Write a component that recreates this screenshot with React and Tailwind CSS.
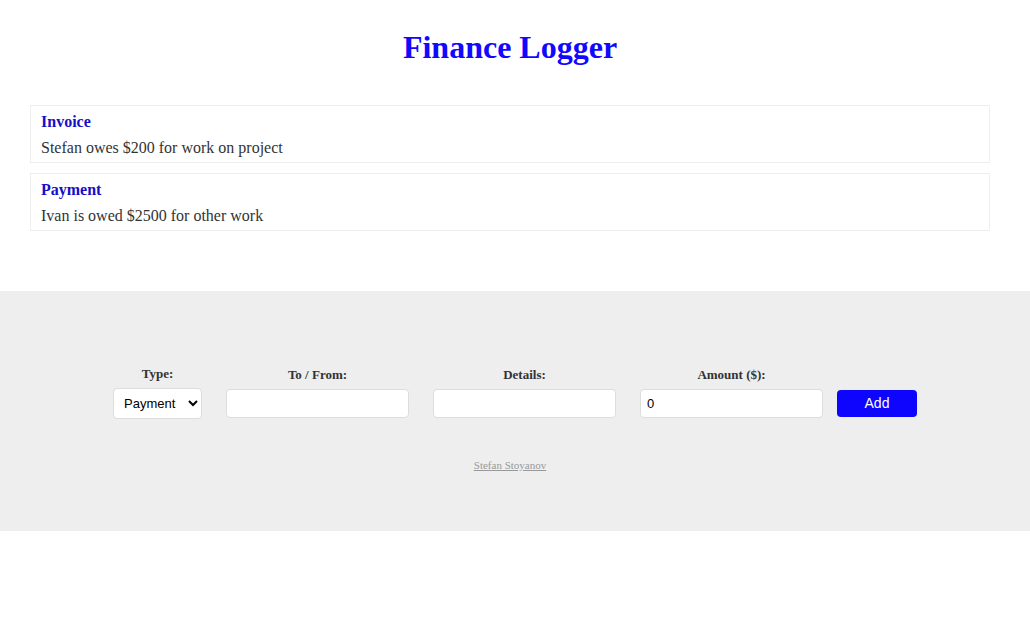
const entries = [
  { kind: "Invoice", text: "Stefan owes $200 for work on project" },
  { kind: "Payment", text: "Ivan is owed $2500 for other work" },
];

const labelClass = "text-[13px] leading-4 font-bold text-[#333]";
const fieldClass =
  "h-[29px] w-full rounded border border-[#ddd] bg-white px-1.5 font-['Liberation_Sans',sans-serif] text-[13px] text-black";

function Field({ id, label, ...props }) {
  return (
    <div className="flex w-[183px] flex-col items-center gap-1.5">
      <label htmlFor={id} className={labelClass}>{label}</label>
      <input id={id} className={fieldClass} {...props} />
    </div>
  );
}

export default function App() {
  return (
    <div className="font-['Liberation_Serif',serif] text-[#333]">
      <main className="pt-7 pr-10 pb-[60px] pl-[30px]">
        <h1 className="text-center text-[32px] leading-[38px] font-bold text-[#1109ff]">Finance Logger</h1>
        <ul className="mt-[39px] flex flex-col gap-2.5">
          {entries.map((entry) => (
            <li key={entry.kind} className="border border-[#eee] px-2.5 pt-[7px] pb-[5px]">
              <h4 className="text-[16px] leading-[18px] font-bold text-[#150fc8]">{entry.kind}</h4>
              <p className="mt-2 text-[16px] leading-[18px]">{entry.text}</p>
            </li>
          ))}
        </ul>
      </main>
      <footer className="bg-[#eee] pt-[75px] pb-[60px]">
        <form className="flex items-center justify-center" onSubmit={(event) => event.preventDefault()}>
          <div className="flex flex-col items-center gap-1.5">
            <label htmlFor="type" className={labelClass}>Type:</label>
            <select id="type" defaultValue="payment" className="h-[31px] w-[89px] rounded border border-[#ddd] bg-white px-1.5 font-['Liberation_Sans',sans-serif] text-[13px] text-black">
              <option value="invoice">Invoice</option>
              <option value="payment">Payment</option>
            </select>
          </div>
          <div className="ml-6 flex gap-6">
            <Field id="tofrom" label="To / From:" type="text" />
            <Field id="details" label="Details:" type="text" />
            <Field id="amount" label="Amount ($):" type="number" defaultValue="0" />
          </div>
          <div className="ml-3.5 flex h-[31px] items-center self-end">
            <button type="submit" className="h-[27px] w-20 rounded bg-[#0e05ff] font-['Liberation_Sans',sans-serif] text-[14px] text-white">Add</button>
          </div>
        </form>
        <p className="mt-10 pr-2.5 text-center text-[11px] leading-3">
          <a href="#author" className="text-[#999] underline">Stefan Stoyanov</a>
        </p>
      </footer>
    </div>
  );
}
